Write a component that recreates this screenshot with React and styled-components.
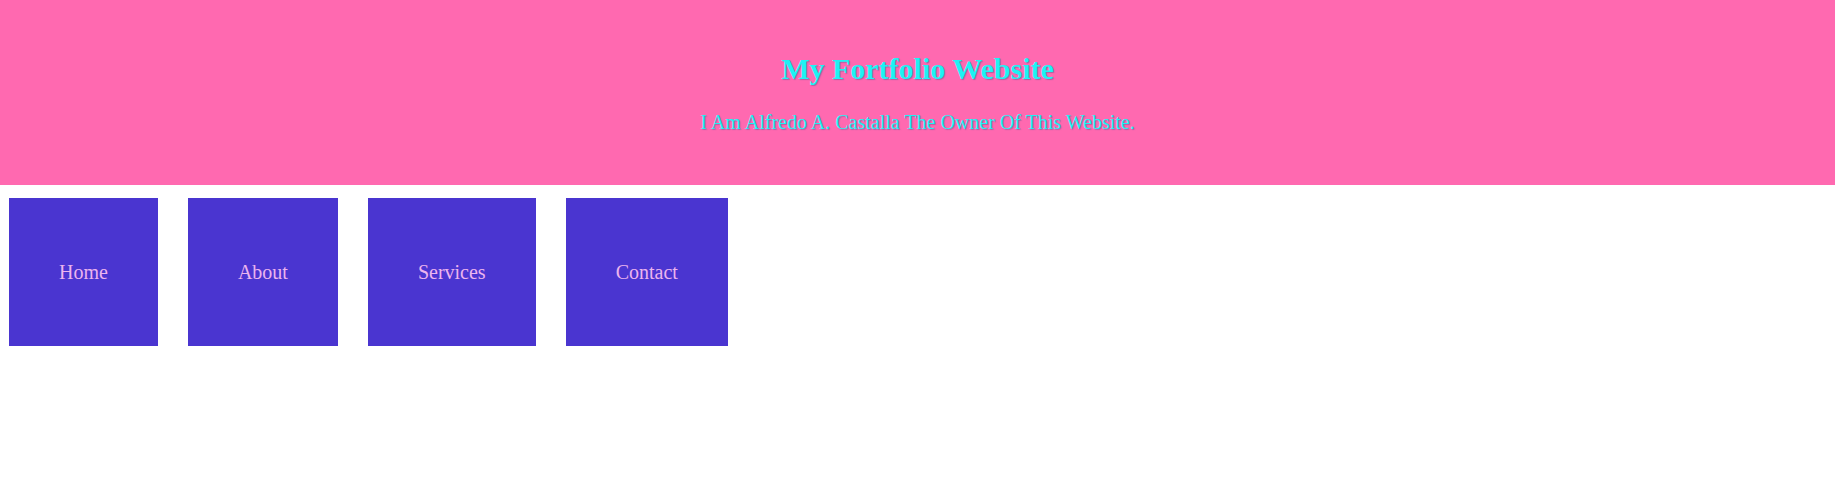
import React from 'react';
import styled, { createGlobalStyle } from 'styled-components';

const GlobalStyle = createGlobalStyle`
  body {
    margin: 0;
    background: #ffffff;
    font-family: 'Liberation Serif', 'Times New Roman', serif;
  }
`;

const links = ['Home', 'About', 'Services', 'Contact'];

export default function App() {
  return (
    <>
      <GlobalStyle />
      <Header>
        <Title>My Fortfolio Website</Title>
        <Subtitle>I Am Alfredo A. Castalla The Owner Of This Website.</Subtitle>
      </Header>
      <Nav>
        {links.map((link) => (
          <NavBox key={link}>{link}</NavBox>
        ))}
      </Nav>
    </>
  );
}

const Header = styled.header`
  width: 1835px;
  height: 185px;
  box-sizing: border-box;
  padding-top: 52px;
  background-color: #ff69b0;
  text-align: center;
  color: #1ef2f4;
  text-shadow: 1px 1px 1px rgba(90, 90, 150, 0.5);
`;

const Title = styled.h1`
  margin: 0 0 25px;
  font-size: 30px;
  font-weight: 700;
  line-height: 34px;
`;

const Subtitle = styled.p`
  margin: 0;
  font-size: 20px;
  line-height: 23px;
`;

const Nav = styled.nav`
  display: flex;
  gap: 30px;
  margin-top: 13px;
  padding-left: 9px;
`;

const NavBox = styled.div`
  display: flex;
  align-items: center;
  justify-content: center;
  height: 148px;
  padding: 0 50px;
  background-color: #4a35d0;
  color: #ebb4ee;
  font-size: 20px;
`;
